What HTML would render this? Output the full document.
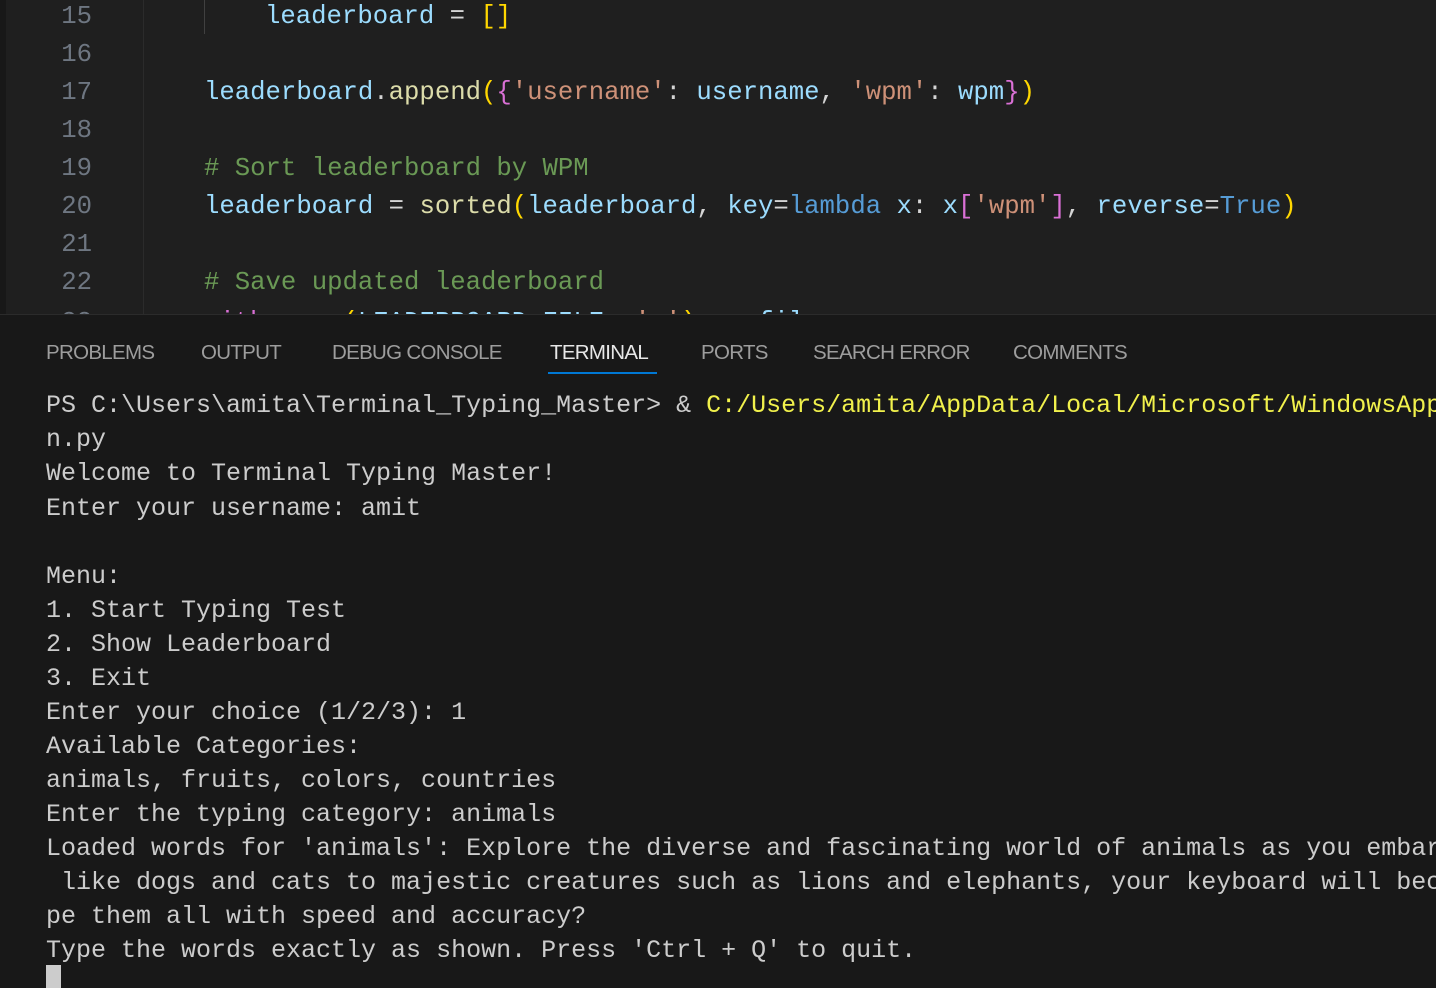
<!DOCTYPE html>
<html><head><meta charset="utf-8"><style>
html,body{margin:0;width:1436px;height:988px;overflow:hidden}
body{background:#181818;position:relative;font-family:"Liberation Mono",monospace}
#ed{position:absolute;left:0;top:0;width:1436px;height:314px;background:#1f1f1f;overflow:hidden}
#ed .strip{position:absolute;left:0;top:0;width:6px;height:314px;background:#181818}
#ed .gut{position:absolute;left:143px;top:0;width:1px;height:314px;background:#2b2b2b}
#ed .guide{position:absolute;left:204px;top:0;width:1px;height:34px;background:#404040}
.l{position:absolute;left:0;height:38px;line-height:38px;font-size:25.65px;white-space:pre}
.n{position:absolute;left:58px;width:34px;text-align:right;color:#6e7681}
.c{position:absolute;left:204px}
.v{color:#9cdcfe}.f{color:#dcdcaa}.s{color:#ce9178}.cm{color:#6a9955}.k{color:#569cd6}.y{color:#ffd700}.p{color:#da70d6}.b{color:#179fff}.w{color:#d4d4d4}
#panel{position:absolute;left:0;top:314px;width:1436px;height:674px;background:#181818;border-top:1px solid #2b2b2b;overflow:hidden}
.tab{position:absolute;top:26px;font-family:"Liberation Sans",sans-serif;font-size:20.5px;color:#9d9d9d;letter-spacing:-0.7px}
.act{color:#e7e7e7}
#ul{position:absolute;left:548px;top:57px;width:109px;height:2px;background:#0078d4}
.t{position:absolute;left:46px;font-size:25px;line-height:34px;height:34px;color:#cccccc;white-space:pre}
.yl{color:#f1f14c}
#cur{position:absolute;left:46px;top:650px;width:15px;height:24px;background:#cccccc}
</style></head><body>
<div id="ed">
<div class="strip"></div><div class="gut"></div>
<div class="l" style="top:-2px"><span class="n">15</span><span class="c" style="left:265px"><span class="v">leaderboard</span><span class="w"> = </span><span class="y">[]</span></span></div>
<div class="guide"></div>
<div class="l" style="top:36px"><span class="n">16</span></div>
<div class="l" style="top:74px"><span class="n">17</span><span class="c"><span class="v">leaderboard</span><span class="w">.</span><span class="f">append</span><span class="y">(</span><span class="p">{</span><span class="s">'username'</span><span class="w">: </span><span class="v">username</span><span class="w">, </span><span class="s">'wpm'</span><span class="w">: </span><span class="v">wpm</span><span class="p">}</span><span class="y">)</span></span></div>
<div class="l" style="top:112px"><span class="n">18</span></div>
<div class="l" style="top:150px"><span class="n">19</span><span class="c cm"># Sort leaderboard by WPM</span></div>
<div class="l" style="top:188px"><span class="n">20</span><span class="c"><span class="v">leaderboard</span><span class="w"> = </span><span class="f">sorted</span><span class="y">(</span><span class="v">leaderboard</span><span class="w">, </span><span class="v">key</span><span class="w">=</span><span class="k">lambda</span><span class="v"> x</span><span class="w">: </span><span class="v">x</span><span class="p">[</span><span class="s">'wpm'</span><span class="p">]</span><span class="w">, </span><span class="v">reverse</span><span class="w">=</span><span class="k">True</span><span class="y">)</span></span></div>
<div class="l" style="top:226px"><span class="n">21</span></div>
<div class="l" style="top:264px"><span class="n">22</span><span class="c cm"># Save updated leaderboard</span></div>
<div class="l" style="top:304px"><span class="n">23</span><span class="c"><span class="p">with</span><span class="w"> </span><span class="f">open</span><span class="y">(</span><span class="v">LEADERBOARD_FILE</span><span class="w">, </span><span class="s">'w'</span><span class="y">)</span><span class="w"> </span><span class="p">as</span><span class="v"> file</span></span></div>
</div>
<div id="panel">
<span class="tab" style="left:46px">PROBLEMS</span>
<span class="tab" style="left:201px">OUTPUT</span>
<span class="tab" style="left:332px">DEBUG CONSOLE</span>
<span class="tab act" style="left:550px">TERMINAL</span>
<span class="tab" style="left:701px">PORTS</span>
<span class="tab" style="left:813px">SEARCH ERROR</span>
<span class="tab" style="left:1013px">COMMENTS</span>
<div id="ul"></div>
<div class="t" style="top:74px">PS C:\Users\amita\Terminal_Typing_Master&gt; &amp; <span class="yl">C:/Users/amita/AppData/Local/Microsoft/WindowsApps/py</span></div>
<div class="t" style="top:108px">n.py</div>
<div class="t" style="top:142px">Welcome to Terminal Typing Master!</div>
<div class="t" style="top:177px">Enter your username: amit</div>
<div class="t" style="top:245px">Menu:</div>
<div class="t" style="top:279px">1. Start Typing Test</div>
<div class="t" style="top:313px">2. Show Leaderboard</div>
<div class="t" style="top:347px">3. Exit</div>
<div class="t" style="top:381px">Enter your choice (1/2/3): 1</div>
<div class="t" style="top:415px">Available Categories:</div>
<div class="t" style="top:449px">animals, fruits, colors, countries</div>
<div class="t" style="top:483px">Enter the typing category: animals</div>
<div class="t" style="top:517px">Loaded words for 'animals': Explore the diverse and fascinating world of animals as you embar</div>
<div class="t" style="top:551px"> like dogs and cats to majestic creatures such as lions and elephants, your keyboard will bec</div>
<div class="t" style="top:585px">pe them all with speed and accuracy?</div>
<div class="t" style="top:619px">Type the words exactly as shown. Press 'Ctrl + Q' to quit.</div>
<div id="cur"></div>
</div>
</body></html>
